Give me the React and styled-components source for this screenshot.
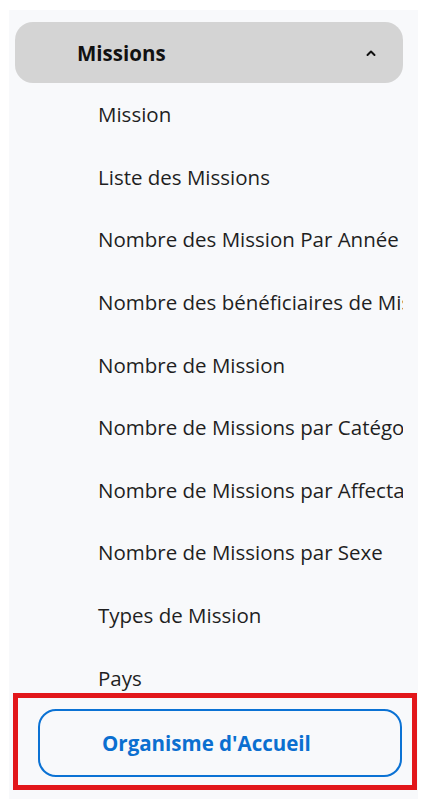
import React from "react";
import styled, { createGlobalStyle } from "styled-components";

const GlobalStyle = createGlobalStyle`
  html, body {
    margin: 0;
    padding: 0;
    background: #ffffff;
    font-family: "Open Sans", "Noto Sans", sans-serif;
  }
`;

const Panel = styled.nav`
  margin: 10px 7px 0 9px;
  height: 789px;
  background: #f8f9fb;
  padding: 12px 0 0 6px;
  box-sizing: border-box;
  overflow: hidden;
`;

const GroupHeader = styled.div`
  display: flex;
  align-items: center;
  justify-content: space-between;
  width: 388px;
  height: 61px;
  box-sizing: border-box;
  padding: 0 26px 0 62px;
  background: #d4d4d4;
  border-radius: 18px;
  font-size: 20.5px;
  font-weight: 700;
  color: #111;
`;

const Chevron = styled.svg`
  width: 12px;
  height: 12px;
`;

const ItemList = styled.ul`
  list-style: none;
  margin: 0;
  padding: 0;
  width: 388px;
`;

const Item = styled.li`
  height: 62.6px;
  display: flex;
  align-items: center;
  padding-left: 83px;
  font-size: 20.5px;
  color: #1f1f1f;
  white-space: nowrap;
  overflow: hidden;
`;

const Highlight = styled.div`
  position: relative;
  margin: -16px 0 0 -2px;
  width: 404px;
  height: 97px;
  box-sizing: border-box;
  border: 5px solid #e2171b;
  padding: 11px 10px 0 20px;
`;

const ActiveItem = styled.div`
  height: 68px;
  box-sizing: border-box;
  border: 2px solid #0b72d4;
  border-radius: 18px;
  display: flex;
  align-items: center;
  padding-left: 62px;
  font-size: 20.5px;
  font-weight: 700;
  color: #0b6fd0;
`;

const items = [
  "Mission",
  "Liste des Missions",
  "Nombre des Mission Par Année",
  "Nombre des bénéficiaires de Mission",
  "Nombre de Mission",
  "Nombre de Missions par Catégorie",
  "Nombre de Missions par Affectation",
  "Nombre de Missions par Sexe",
  "Types de Mission",
  "Pays",
];

export default function App() {
  return (
    <>
      <GlobalStyle />
      <Panel>
        <GroupHeader>
          <span>Missions</span>
          <Chevron viewBox="0 0 12 12">
            <path d="M2.5 8 L6 4.5 L9.5 8" fill="none" stroke="#111" strokeWidth="2" strokeLinecap="round" strokeLinejoin="round" />
          </Chevron>
        </GroupHeader>
        <ItemList>
          {items.map((label) => (
            <Item key={label}>{label}</Item>
          ))}
        </ItemList>
        <Highlight>
          <ActiveItem>Organisme d'Accueil</ActiveItem>
        </Highlight>
      </Panel>
    </>
  );
}
